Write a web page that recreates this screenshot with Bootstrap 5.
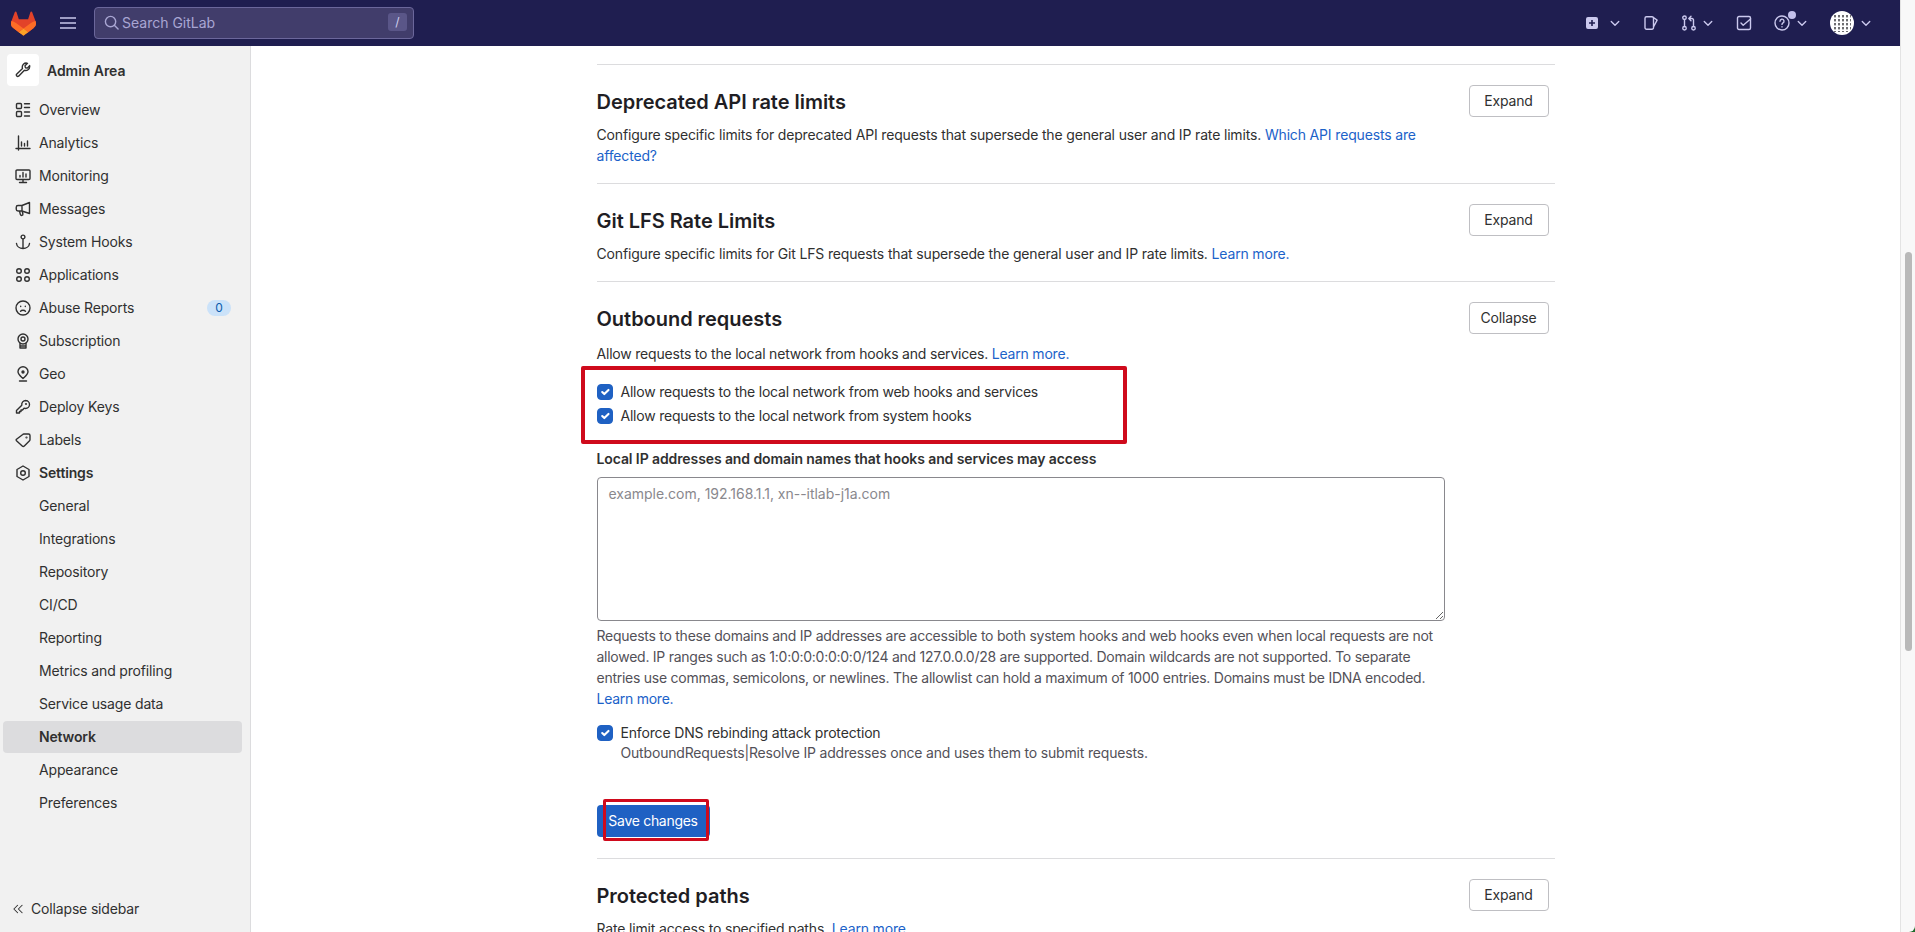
<!DOCTYPE html>
<html lang="en">
<head>
    <meta charset="UTF-8">
    <meta name="viewport" content="width=device-width, initial-scale=1.0">
    <title>Network · Admin Area · GitLab</title>
    <link href="https://cdn.jsdelivr.net/npm/bootstrap@5.3.2/dist/css/bootstrap.min.css" rel="stylesheet">
    <style>
        html, body {
            height: 100%;
            overflow: hidden;
        }

        body {
            font-family: Inter, "Liberation Sans", sans-serif;
            font-size: 14px;
            line-height: 21px;
            letter-spacing: -0.16px;
            color: #303030;
            background: #1f6b2c;
        }

        a {
            color: #1b62c9;
            text-decoration: none;
        }

        /* top bar */
        .tb-nav {
            height: 46px;
            padding: 0 28px 0 11px;
            background: #1f1e50;
            flex-wrap: nowrap;
            justify-content: flex-start;
            flex-shrink: 0;
        }

        .tb-nav svg {
            display: block;
            flex-shrink: 0;
        }

        .tb-logo {
            width: 25px;
            height: 25px;
        }

        .tb-burger {
            margin-left: 24px;
            width: 16px;
            height: 16px;
            stroke: #c9c8ea;
            stroke-width: 1.5;
            fill: none;
        }

        .tb-search {
            margin-left: 18px;
            width: 320px;
            height: 32px;
            padding: 0 6px 2px 9px;
            gap: 3px;
            background: #413d6b;
            border: 1px solid #6b679b;
            border-radius: 4px;
            color: #a9a6d3;
            letter-spacing: 0;
        }

        .tb-search-ico {
            width: 15px;
            height: 15px;
            stroke: #a9a6d3;
            stroke-width: 1.5;
            fill: none;
        }

        .tb-slash {
            width: 19px;
            height: 18px;
            background: #5a5688;
            border-radius: 3px;
            font-size: 12px;
            line-height: 18px;
            text-align: center;
            color: #d2d1f0;
        }

        .tb-group {
            gap: 22px;
        }

        .tb-wide {
            gap: 9px;
        }

        .tb-tight {
            gap: 5px;
        }

        .tb-mid {
            gap: 6px;
        }

        .tb-ico {
            width: 16px;
            height: 16px;
            stroke: #cbc9ee;
            stroke-width: 1.4;
            fill: none;
            stroke-linecap: round;
            stroke-linejoin: round;
        }

        .tb-chev {
            width: 12px;
            height: 12px;
            stroke: #cbc9ee;
            stroke-width: 1.8;
            fill: none;
            stroke-linecap: round;
            stroke-linejoin: round;
        }

        .tb-dot {
            position: absolute;
            top: -4px;
            right: 12px;
            width: 8px;
            height: 8px;
            border-radius: 50%;
            background: #c3c1ec;
        }

        /* sidebar */
        .side-col {
            width: 251px;
            flex-shrink: 0;
            padding: 8px 8px 7px 3px;
            background: #f1f1f1;
            border-right: 1px solid #dcdcde;
        }

        .side-head {
            padding-left: 4px;
            margin-bottom: 8px;
            font-weight: 600;
            gap: 8px;
            letter-spacing: -0.05px;
        }

        .side-tile {
            width: 32px;
            height: 32px;
            background: #fff;
            border-radius: 4px;
        }

        .side-ico {
            width: 16px;
            height: 16px;
            flex-shrink: 0;
            stroke: #303030;
            stroke-width: 1.4;
            fill: none;
            stroke-linecap: round;
            stroke-linejoin: round;
        }

        .side-link {
            height: 32px;
            margin-bottom: 1px;
            padding: 0 12px 2px;
            gap: 8px;
            color: #303030;
            border-radius: 4px;
        }

        .side-link svg {
            margin-top: 2px;
        }

        .side-sub {
            padding-left: 36px;
        }

        .side-on {
            background: #dcdcde;
            font-weight: 600;
        }

        .side-strong {
            font-weight: 600;
        }

        .side-count {
            margin-left: auto;
            margin-right: -1px;
            margin-top: 2px;
            width: 24px;
            padding: 2px 0;
            background: #cbe2f9;
            color: #0b5cad;
            font-size: 12px;
            line-height: 12px;
            font-weight: 400;
        }

        .side-collapse {
            margin-top: auto;
            margin-bottom: 0;
            padding-left: 9px;
            gap: 7px;
        }

        .side-collapse svg {
            width: 12px;
            height: 12px;
        }

        /* content */
        .main-col {
            min-width: 0;
            overflow: hidden;
            padding-top: 18px;
            background: #fff;
        }

        .set-wrap {
            width: 958px;
            margin: 0 auto;
        }

        .set-block {
            padding: 20px 6px 17px 0;
            border-top: 1px solid #dcdcde;
        }

        .set-block-open {
            padding-bottom: 21px;
        }

        .set-title {
            margin: 0;
            padding-top: 2px;
            font-size: 20px;
            line-height: 30px;
            font-weight: 600;
            letter-spacing: -0.03px;
            color: #1f1e24;
        }

        .set-toggle {
            width: 80px;
            height: 32px;
            padding: 0;
            font-size: 14px;
            line-height: 30px;
            letter-spacing: -0.16px;
            color: #303030;
            background: #fff;
            border: 1px solid #bfbfc3;
            border-radius: 4px;
        }

        .set-desc {
            width: 847px;
            margin: 7px 0 0;
        }

        .set-form {
            width: 848px;
        }

        .open-desc {
            margin-top: 9px;
            letter-spacing: -0.2px;
        }

        .check-area {
            position: relative;
            margin-top: 16px;
        }

        .check-row {
            min-height: 24px;
            margin: 0;
            padding-left: 24px;
            line-height: 24px;
            letter-spacing: -0.22px;
        }

        .check-row .form-check-input {
            width: 16px;
            height: 16px;
            margin: 4px 0 0 -24px;
            border-color: #1f61c3;
            border-radius: 4px;
            background-color: #1f61c3;
        }

        .red-box {
            position: absolute;
            top: -14px;
            left: -16px;
            width: 546px;
            height: 78px;
            border: 4px solid #cf0a1c;
            border-radius: 2px;
            pointer-events: none;
        }

        .ip-label {
            display: block;
            margin: 20px 0 8px;
            font-weight: 600;
            letter-spacing: -0.1px;
        }

        .ip-area {
            display: block;
            width: 848px;
            height: 144px;
            padding: 5px 11px;
            font-size: 14px;
            line-height: 21px;
            letter-spacing: -0.02px;
            color: #303030;
            border: 1px solid #89888d;
            border-radius: 4px;
            box-shadow: none;
        }

        .ip-area::placeholder {
            color: #89888d;
            opacity: 1;
        }

        .ip-hint {
            margin: 4px 0 0;
            font-size: 14px;
            letter-spacing: -0.26px;
            color: #535158;
        }

        .dns-row {
            margin-top: 12px;
            letter-spacing: -0.16px;
        }

        .dns-sub {
            margin: -3px 0 0;
            padding-left: 24px;
            letter-spacing: -0.18px;
            color: #535158;
            white-space: nowrap;
        }

        .save-wrap {
            position: relative;
            width: 113px;
            margin-top: 42px;
        }

        .save-btn {
            width: 113px;
            height: 32px;
            padding: 0;
            font-size: 14px;
            line-height: 32px;
            letter-spacing: -0.3px;
            color: #fff;
            background: #1f61c3;
            border: 0;
            border-radius: 4px;
        }

        .save-red {
            position: absolute;
            top: -6px;
            left: 6px;
            width: 106px;
            height: 42px;
            border: 3px solid #cf0a1c;
            border-radius: 2px;
            pointer-events: none;
        }

        /* window scrollbar */
        .bar-col {
            width: 15px;
            flex-shrink: 0;
            padding: 252px 3px 0 4px;
            background: #f8f8f8;
            border-left: 1px solid #e3e3e3;
            border-bottom-right-radius: 6px;
        }

        .bar-thumb {
            height: 399px;
            background: #b9b9b9;
            border-radius: 4px;
        }
    </style>
</head>
<body>
    <div class="d-flex vh-100">
        <div class="d-flex flex-column flex-grow-1 overflow-hidden">

            <!-- Top bar -->
            <nav class="navbar tb-nav">
                <svg class="tb-logo" viewBox="0 0 25 24">
                    <path d="m24.507 9.5-.034-.09L21.082.562a.896.896 0 0 0-1.694.091l-2.29 7.01H7.825L5.535.653a.898.898 0 0 0-1.694-.09L.451 9.411.416 9.5a6.297 6.297 0 0 0 2.09 7.278l.012.01.03.022 5.16 3.867 2.56 1.935 1.554 1.176a1.051 1.051 0 0 0 1.268 0l1.555-1.176 2.56-1.935 5.197-3.89.014-.01A6.297 6.297 0 0 0 24.507 9.5Z" fill="#E24329"/>
                    <path d="m24.507 9.5-.034-.09a11.44 11.44 0 0 0-4.56 2.051l-7.447 5.632 4.742 3.584 5.197-3.89.014-.01A6.297 6.297 0 0 0 24.507 9.5Z" fill="#FC6D26"/>
                    <path d="m7.707 20.677 2.56 1.935 1.555 1.176a1.051 1.051 0 0 0 1.268 0l1.555-1.176 2.56-1.935-4.743-3.584-4.755 3.584Z" fill="#FCA326"/>
                    <path d="M5.01 11.461a11.43 11.43 0 0 0-4.56-2.05l-.034.09a6.297 6.297 0 0 0 2.09 7.278l.012.01.03.022 5.16 3.867 4.745-3.584-7.444-5.633Z" fill="#FC6D26"/>
                </svg>
                <svg class="tb-burger" viewBox="0 0 16 16"><path d="M0 3h16M0 8h16M0 13h16"/></svg>
                <div class="tb-search d-flex align-items-center">
                    <svg class="tb-search-ico" viewBox="0 0 16 16"><circle cx="7" cy="7" r="5.5"/><path d="M11 11l4 4" stroke-linecap="round"/></svg>
                    <span class="flex-grow-1">Search GitLab</span>
                    <span class="tb-slash">/</span>
                </div>
                <div class="tb-group d-flex align-items-center ms-auto">
                    <div class="tb-wide d-flex align-items-center">
                        <svg class="tb-ico" viewBox="0 0 16 16"><path fill="#cbc9ee" fill-rule="evenodd" stroke="none" d="M4 2h8a2 2 0 0 1 2 2v8a2 2 0 0 1-2 2H4a2 2 0 0 1-2-2V4a2 2 0 0 1 2-2zm3.2 3v2.2H5v1.6h2.2V11h1.6V8.8H11V7.2H8.8V5z"/></svg>
                        <svg class="tb-chev" viewBox="0 0 16 16"><path d="M3 6l5 5 5-5"/></svg>
                    </div>
                    <svg class="tb-ico" viewBox="0 0 16 16"><path d="M2 3.2a1.5 1.5 0 0 1 1.5-1.5H9a1.5 1.5 0 0 1 1.5 1.5v9.6A1.5 1.5 0 0 1 9 14.3H3.5A1.5 1.5 0 0 1 2 12.8zM10.5 2.5l3.6 2.6-3.6 6.9"/></svg>
                    <div class="tb-tight d-flex align-items-center">
                        <svg class="tb-ico" viewBox="0 0 16 16"><circle cx="3.5" cy="2.75" r="1.75"/><circle cx="3.5" cy="13.25" r="1.75"/><circle cx="12.5" cy="13.25" r="1.75"/><path d="M3.5 4.5v7M12.5 11.5V5A1.5 1.5 0 0 0 11 3.5H8M10 1.3 7.8 3.5 10 5.7"/></svg>
                        <svg class="tb-chev" viewBox="0 0 16 16"><path d="M3 6l5 5 5-5"/></svg>
                    </div>
                    <svg class="tb-ico" viewBox="0 0 16 16"><rect x="1.5" y="1.5" width="13" height="13" rx="1.5"/><path d="M5 8l2.2 2.2L14.5 4"/></svg>
                    <div class="tb-mid d-flex align-items-center position-relative">
                        <svg class="tb-ico" viewBox="0 0 16 16"><circle cx="8" cy="8" r="7"/><path d="M6 6.2a2 2 0 1 1 3 1.7c-.7.4-1 .8-1 1.5M8 11.8v.1"/></svg>
                        <svg class="tb-chev" viewBox="0 0 16 16"><path d="M3 6l5 5 5-5"/></svg>
                        <span class="tb-dot"></span>
                    </div>
                    <div class="tb-mid d-flex align-items-center">
                        <svg width="24" height="24" viewBox="0 0 24 24">
                            <defs>
                                <pattern id="avatarDots" width="4" height="4" patternUnits="userSpaceOnUse"><rect width="2" height="2.4" fill="#6d6d70"/></pattern>
                                <clipPath id="avatarClip"><circle cx="12" cy="12" r="12"/></clipPath>
                            </defs>
                            <circle cx="12" cy="12" r="12" fill="#fff"/>
                            <rect x="3" y="3" width="18" height="18" fill="url(#avatarDots)" clip-path="url(#avatarClip)"/>
                        </svg>
                        <svg class="tb-chev" viewBox="0 0 16 16"><path d="M3 6l5 5 5-5"/></svg>
                    </div>
                </div>
            </nav>

            <div class="d-flex flex-grow-1 overflow-hidden">

                <!-- Sidebar -->
                <aside class="side-col d-flex flex-column">
                    <div class="side-head d-flex align-items-center">
                        <span class="side-tile d-flex align-items-center justify-content-center">
                            <svg class="side-ico" viewBox="0 0 16 16"><path d="M14.7 4.4a4 4 0 0 1-5.3 3.9l-5.8 5.9a1.45 1.45 0 0 1-2-2l5.9-5.8a4 4 0 0 1 5-5.1L10 3.8l.4 1.9 1.9.4 2.3-2.5z"/></svg>
                        </span>
                        Admin Area
                    </div>
                    <a class="side-link d-flex align-items-center" href="#"><svg class="side-ico" viewBox="0 0 16 16"><rect x="1.5" y="1.5" width="5" height="5" rx="1"/><rect x="1.5" y="9.5" width="5" height="5" rx="1"/><path d="M9.5 1.75h5M9.5 5.5h5M9.5 10h5M9.5 14h5"/></svg>Overview</a>
                    <a class="side-link d-flex align-items-center" href="#"><svg class="side-ico" viewBox="0 0 16 16"><path d="M3.5 1v14M1 13.5h14M6.5 11V7M9.5 11V8.5M12.5 11V6"/></svg>Analytics</a>
                    <a class="side-link d-flex align-items-center" href="#"><svg class="side-ico" viewBox="0 0 16 16"><rect x="1" y="2" width="14" height="9.5" rx="1"/><path d="M8 11.5V14.5M4.5 14.5h7M5 9V7.5M8 9V4.5M11 9V6"/></svg>Monitoring</a>
                    <a class="side-link d-flex align-items-center" href="#"><svg class="side-ico" viewBox="0 0 16 16"><path d="M14.5 1.5v11L7 10H3A1.75 1.75 0 0 1 1.25 8.25v-2A1.75 1.75 0 0 1 3 4.5h4zM7 4.5V10M4.5 10l.9 3.6a1.3 1.3 0 0 0 2.5-.6L7.3 10.5"/></svg>Messages</a>
                    <a class="side-link d-flex align-items-center" href="#"><svg class="side-ico" viewBox="0 0 16 16"><circle cx="8" cy="3" r="1.9"/><path d="M8 5v9.5M1.5 9.5A6.5 5.5 0 0 0 8 14.5a6.5 5.5 0 0 0 6.5-5"/></svg>System Hooks</a>
                    <a class="side-link d-flex align-items-center" href="#"><svg class="side-ico" viewBox="0 0 16 16"><circle cx="4" cy="4" r="2.3"/><circle cx="12" cy="4" r="2.3"/><circle cx="4" cy="12" r="2.3"/><circle cx="12" cy="12" r="2.3"/></svg>Applications</a>
                    <a class="side-link d-flex align-items-center" href="#"><svg class="side-ico" viewBox="0 0 16 16"><circle cx="8" cy="8" r="7"/><path d="M5.5 11.3c1-1.4 4-1.4 5 0M5.7 6.3v.3M10.3 6.3v.3"/></svg>Abuse Reports<span class="badge rounded-pill side-count">0</span></a>
                    <a class="side-link d-flex align-items-center" href="#"><svg class="side-ico" viewBox="0 0 16 16"><circle cx="8" cy="6" r="5"/><circle cx="8" cy="6" r="2"/><path d="M5 10.5V15h6v-4.5M5 13h6"/></svg>Subscription</a>
                    <a class="side-link d-flex align-items-center" href="#"><svg class="side-ico" viewBox="0 0 16 16"><path d="M8 12.5C5.5 10.2 3 8.5 3 5.8a5 5 0 0 1 10 0c0 2.7-2.5 4.4-5 6.7zM4.5 15h7"/><circle cx="8" cy="6" r="1" fill="#303030"/></svg>Geo</a>
                    <a class="side-link d-flex align-items-center" href="#"><svg class="side-ico" viewBox="0 0 16 16"><path d="M10.5 1.5a4 4 0 0 1 0 8c-.5 0-1-.1-1.4-.3L7.5 11H6v1.5H4.5V14h-3v-2.5l5.3-5.3a4 4 0 0 1 4-4.7z"/><circle cx="11" cy="5" r=".4"/></svg>Deploy Keys</a>
                    <a class="side-link d-flex align-items-center" href="#"><svg class="side-ico" viewBox="0 0 16 16"><path d="M8.8 2h4.7A1.5 1.5 0 0 1 15 3.5v4.2a1.5 1.5 0 0 1-.45 1.05L9.3 14a1.5 1.5 0 0 1-2.1 0L1.5 8.7a1 1 0 0 1 0-1.4L7.75 2.45A1.5 1.5 0 0 1 8.8 2z"/><circle cx="11.5" cy="5.5" r=".4"/></svg>Labels</a>
                    <a class="side-link side-strong d-flex align-items-center" href="#"><svg class="side-ico" viewBox="0 0 16 16"><path d="M8 1l6 3.5v7L8 15l-6-3.5v-7z"/><circle cx="8" cy="8" r="2.3"/></svg>Settings</a>
                    <a class="side-link side-sub d-flex align-items-center" href="#">General</a>
                    <a class="side-link side-sub d-flex align-items-center" href="#">Integrations</a>
                    <a class="side-link side-sub d-flex align-items-center" href="#">Repository</a>
                    <a class="side-link side-sub d-flex align-items-center" href="#">CI/CD</a>
                    <a class="side-link side-sub d-flex align-items-center" href="#">Reporting</a>
                    <a class="side-link side-sub d-flex align-items-center" href="#">Metrics and profiling</a>
                    <a class="side-link side-sub d-flex align-items-center" href="#">Service usage data</a>
                    <a class="side-link side-sub side-on d-flex align-items-center" href="#">Network</a>
                    <a class="side-link side-sub d-flex align-items-center" href="#">Appearance</a>
                    <a class="side-link side-sub d-flex align-items-center" href="#">Preferences</a>
                    <a class="side-link side-collapse d-flex align-items-center" href="#"><svg class="side-ico" viewBox="0 0 16 16"><path d="M7.5 3 2.5 8l5 5M13.5 3l-5 5 5 5"/></svg>Collapse sidebar</a>
                </aside>

                <!-- Settings -->
                <main class="main-col flex-grow-1">
                    <div class="set-wrap">
                        <section class="set-block">
                            <div class="d-flex justify-content-between">
                                <h4 class="set-title">Deprecated API rate limits</h4>
                                <button class="btn set-toggle" type="button">Expand</button>
                            </div>
                            <p class="set-desc">Configure specific limits for deprecated API requests that supersede the general user and IP rate limits. <a href="#">Which API requests are affected?</a></p>
                        </section>

                        <section class="set-block">
                            <div class="d-flex justify-content-between">
                                <h4 class="set-title">Git LFS Rate Limits</h4>
                                <button class="btn set-toggle" type="button">Expand</button>
                            </div>
                            <p class="set-desc">Configure specific limits for Git LFS requests that supersede the general user and IP rate limits. <a href="#">Learn more.</a></p>
                        </section>

                        <section class="set-block set-block-open">
                            <div class="d-flex justify-content-between">
                                <h4 class="set-title">Outbound requests</h4>
                                <button class="btn set-toggle" type="button">Collapse</button>
                            </div>
                            <p class="set-desc open-desc">Allow requests to the local network from hooks and services. <a href="#">Learn more.</a></p>
                            <form class="set-form" onsubmit="return false">
                                <div class="check-area">
                                    <div class="form-check check-row">
                                        <input class="form-check-input" type="checkbox" id="allowWeb" checked>
                                        <label class="form-check-label" for="allowWeb">Allow requests to the local network from web hooks and services</label>
                                    </div>
                                    <div class="form-check check-row">
                                        <input class="form-check-input" type="checkbox" id="allowSystem" checked>
                                        <label class="form-check-label" for="allowSystem">Allow requests to the local network from system hooks</label>
                                    </div>
                                    <div class="red-box"></div>
                                </div>
                                <label class="ip-label" for="allowList">Local IP addresses and domain names that hooks and services may access</label>
                                <textarea class="form-control ip-area" id="allowList" placeholder="example.com, 192.168.1.1, xn--itlab-j1a.com"></textarea>
                                <p class="ip-hint">Requests to these domains and IP addresses are accessible to both system hooks and web hooks even when local requests are not allowed. IP ranges such as 1:0:0:0:0:0:0:0/124 and 127.0.0.0/28 are supported. Domain wildcards are not supported. To separate entries use commas, semicolons, or newlines. The allowlist can hold a maximum of 1000 entries. Domains must be IDNA encoded. <a href="#">Learn more.</a></p>
                                <div class="form-check check-row dns-row">
                                    <input class="form-check-input" type="checkbox" id="dnsRebind" checked>
                                    <label class="form-check-label" for="dnsRebind">Enforce DNS rebinding attack protection</label>
                                </div>
                                <p class="dns-sub">OutboundRequests|Resolve IP addresses once and uses them to submit requests.</p>
                                <div class="save-wrap">
                                    <button class="btn save-btn" type="submit">Save changes</button>
                                    <div class="save-red"></div>
                                </div>
                            </form>
                        </section>

                        <section class="set-block">
                            <div class="d-flex justify-content-between">
                                <h4 class="set-title">Protected paths</h4>
                                <button class="btn set-toggle" type="button">Expand</button>
                            </div>
                            <p class="set-desc">Rate limit access to specified paths. <a href="#">Learn more.</a></p>
                        </section>
                    </div>
                </main>
            </div>
        </div>

        <div class="bar-col"><div class="bar-thumb"></div></div>
    </div>

    <script src="https://cdn.jsdelivr.net/npm/bootstrap@5.3.2/dist/js/bootstrap.bundle.min.js"></script>
</body>
</html>
